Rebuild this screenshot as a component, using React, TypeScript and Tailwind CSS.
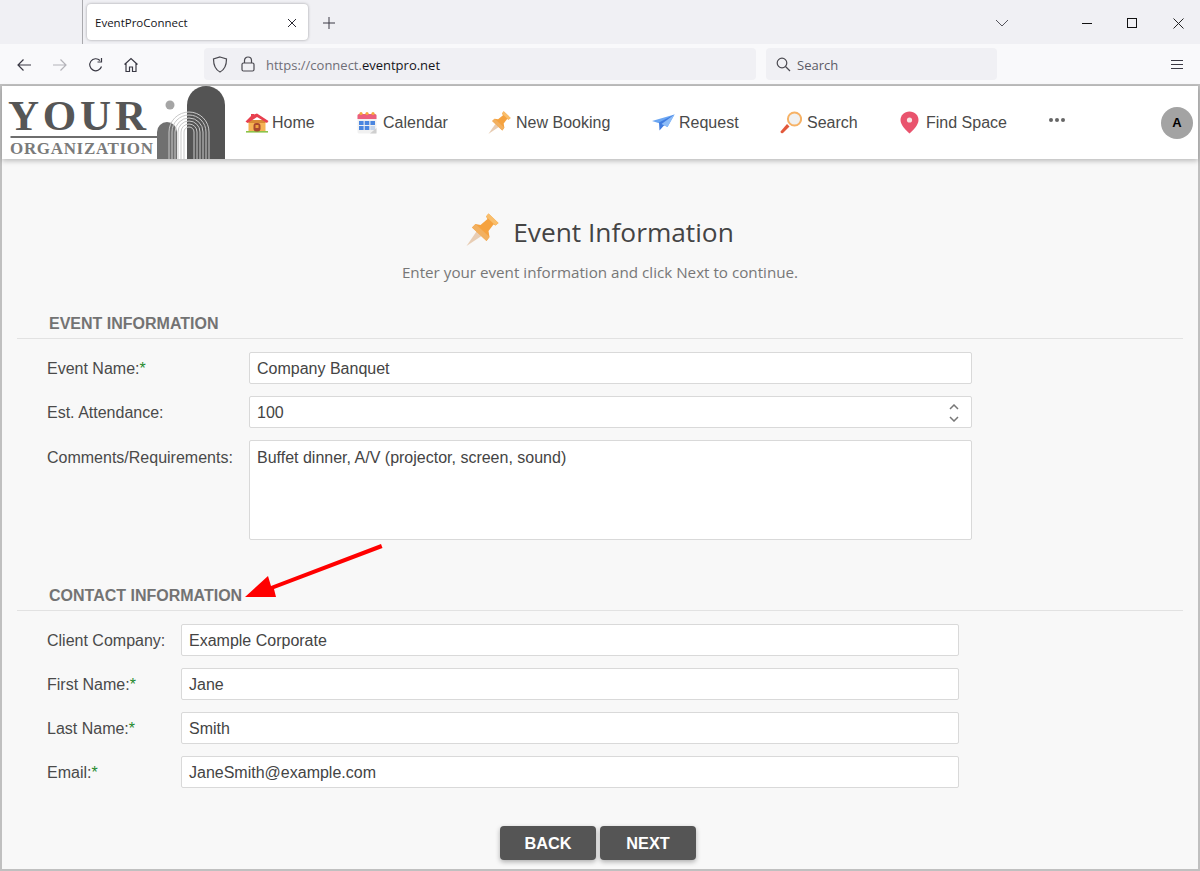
const ChromeFont = "font-['Open_Sans',sans-serif]";

const HomeIcon = () => (
    <svg width="24" height="20" viewBox="0 0 24 20" className="mt-[1px]">
        <rect x="3.5" y="7" width="17" height="11.5" fill="#f6b455" />
        <rect x="3.5" y="7" width="17" height="3" fill="#d98a35" />
        <rect x="1" y="18" width="22" height="1.6" fill="#8bc34a" />
        <path d="M0.5 8.5 L6 3 V1 H9 V1.5 L12 0.5 L23.5 8 L22 10 L12 4 L2.5 10 Z" fill="#e8404f" />
        <rect x="8.5" y="10" width="7" height="8.5" rx="3" fill="#a8482f" />
        <rect x="10.5" y="12" width="3" height="3" fill="#f0a040" />
    </svg>
);

const CalendarIcon = () => (
    <svg width="20" height="23" viewBox="0 0 20 23">
        <rect x="0.5" y="3" width="19" height="19.5" rx="1.5" fill="#f1f1f1" />
        <path d="M0.5 4.5 a1.5 1.5 0 0 1 1.5 -1.5 h16 a1.5 1.5 0 0 1 1.5 1.5 V8 H0.5 Z" fill="#ec5f7c" />
        <circle cx="4" cy="2.5" r="1.6" fill="#f5a93c" />
        <circle cx="10" cy="2.5" r="1.6" fill="#f5a93c" />
        <circle cx="16" cy="2.5" r="1.6" fill="#f5a93c" />
        <rect x="2" y="10" width="4.6" height="4" fill="#4a86e0" />
        <rect x="7.7" y="10" width="4.6" height="4" fill="#4a86e0" />
        <rect x="13.4" y="10" width="4.6" height="4" fill="#4a86e0" />
        <rect x="2" y="15" width="4.6" height="4" fill="#4a86e0" />
        <rect x="7.7" y="15" width="4.6" height="4" fill="#4a86e0" />
        <rect x="13.4" y="15" width="4.6" height="4" fill="#c4d4ea" />
        <path d="M13 22.5 L19.5 17 V22.5 Z" fill="#cfcfcf" />
    </svg>
);

const PinIcon = ({ size }: { size: number }) => (
    <svg width={size} height={size} viewBox="0 0 32 33">
        <path d="M0 33 L10 18.5 L15 23 Z" fill="#e8cdb4" />
        <path d="M22 0.5 L32 10 L29 12.5 L27 11.5 L22 18 L23 24 L20 28 L5.5 14.5 L9 11 L14 12 L21 6 L19.5 3.5 Z" fill="#f5a23f" />
        <path d="M22 0.5 L32 10 L29 12.5 L19.5 3.5 Z" fill="#f9be6c" />
        <path d="M5.5 14.5 L9 11 L23 24 L20 28 Z" fill="#f2b060" />
    </svg>
);

const PlaneIcon = () => (
    <svg width="23" height="17" viewBox="0 0 23 17">
        <path d="M0 7 L22.5 0.5 L15.5 13 L8 9.5 Z" fill="#6ba6f2" />
        <path d="M22.5 0.5 L7 8.5 L7.5 16.5 L11.5 12 Z" fill="#3f7be0" />
        <path d="M22.5 0.5 L9.5 10 L15.5 13 Z" fill="#8dbcf7" />
    </svg>
);

const LoupeIcon = () => (
    <svg width="22" height="23" viewBox="0 0 22 23">
        <path d="M0.5 20.5 L7 13 L9.5 15.5 L3 22 Q0.5 23 0.5 20.5 Z" fill="#e2583a" />
        <circle cx="14.5" cy="8" r="6.6" fill="#f1f1f1" stroke="#f6b266" strokeWidth="2" />
    </svg>
);

const MapPinIcon = () => (
    <svg width="19" height="23" viewBox="0 0 19 23">
        <path d="M9.5 0.5 C14.7 0.5 18.5 4.3 18.5 9 C18.5 14 13 19.5 9.5 22.5 C6 19.5 0.5 14 0.5 9 C0.5 4.3 4.3 0.5 9.5 0.5 Z" fill="#e9536d" />
        <circle cx="9.5" cy="9" r="2.6" fill="#f9e4e4" />
    </svg>
);

const Logo = () => (
    <svg width="220" height="73" viewBox="0 0 220 73" className="shrink-0">
        <text x="3" y="44" fontFamily="'Liberation Serif', serif" fontWeight="700" fontSize="43" fill="#565656" textLength="138" lengthAdjust="spacing">YOUR</text>
        <rect x="5.5" y="50" width="147" height="2" fill="#6e6e6e" />
        <text x="5" y="68" fontFamily="'Liberation Serif', serif" fontWeight="700" fontSize="17" fill="#7a7a7a" textLength="143" lengthAdjust="spacing">ORGANIZATION</text>
        <circle cx="165" cy="19" r="4.5" fill="#a5a5a5" />
        <path d="M182 73 V19 A19 19 0 0 1 220 19 V73 Z" fill="#545454" />
        <path d="M152 73 V46 A10 10 0 0 1 172 46 V73 Z" fill="#707070" />
        <path d="M164 73 V46 A20 20 0 0 1 204 46 V73" fill="none" stroke="#c9c9c9" strokeWidth="1" />
        <path d="M167 73 V46 A17 17 0 0 1 201 46 V73" fill="none" stroke="#c9c9c9" strokeWidth="1" />
        <path d="M170 73 V46 A14 14 0 0 1 198 46 V73" fill="none" stroke="#c9c9c9" strokeWidth="1" />
        <path d="M173 73 V46 A11 11 0 0 1 195 46 V73" fill="none" stroke="#c9c9c9" strokeWidth="1" />
        <path d="M176 73 V46 A8 8 0 0 1 192 46 V73" fill="none" stroke="#c9c9c9" strokeWidth="1" />
        <path d="M179 73 V46 A5 5 0 0 1 189 46 V73" fill="none" stroke="#c9c9c9" strokeWidth="1" />
    </svg>
);

const BrowserBar = () => (
    <div className={`shrink-0 ${ChromeFont}`}>
        <div className="h-[44px] bg-[#f0f0f4] flex items-center relative">
            <div className="w-[1px] h-[44px] bg-[#a9a9ad] ml-[82px]" />
            <div className="ml-[4px] w-[221px] h-[36px] bg-white rounded-[4px] shadow-[0_0_3px_rgba(0,0,0,0.35)] flex items-center justify-between pl-[8px] pr-[11px]">
                <span className="text-[11.5px] text-[#15141a] mt-[2px]">EventProConnect</span>
                <svg width="10" height="10" viewBox="0 0 10 10" className="mt-[2px]"><path d="M1 1 L9 9 M9 1 L1 9" stroke="#2b2a33" strokeWidth="1" /></svg>
            </div>
            <svg width="12" height="12" viewBox="0 0 12 12" className="ml-[15px] mt-[2px]"><path d="M6 0 V12 M0 6 H12" stroke="#3a3944" strokeWidth="1" /></svg>
            <div className="flex-1" />
            <svg width="14" height="8" viewBox="0 0 14 8" className="mr-[73px] mt-[2px]"><path d="M1 1 L7 7 L13 1" fill="none" stroke="#55545c" strokeWidth="1" /></svg>
            <div className="w-[10px] h-[1px] bg-[#111] mr-[35px] mt-[2px]" />
            <div className="w-[10px] h-[10px] border border-[#111] mr-[36px] mt-[2px]" />
            <svg width="11" height="11" viewBox="0 0 11 11" className="mr-[16px] mt-[2px]"><path d="M0.5 0.5 L10.5 10.5 M10.5 0.5 L0.5 10.5" stroke="#222" strokeWidth="1" /></svg>
        </div>
        <div className="h-[40px] bg-[#f9f9fb] flex items-center">
            <svg width="16" height="16" viewBox="0 0 16 16" className="ml-[16px] mt-[2px]"><path d="M15 8 H2 M7.5 2.5 L2 8 L7.5 13.5" fill="none" stroke="#3a3944" strokeWidth="1.2" /></svg>
            <svg width="16" height="16" viewBox="0 0 16 16" className="ml-[20px] mt-[2px]"><path d="M1 8 H14 M8.5 2.5 L14 8 L8.5 13.5" fill="none" stroke="#b4b3b9" strokeWidth="1.2" /></svg>
            <svg width="16" height="16" viewBox="0 0 16 16" className="ml-[20px] mt-[2px]"><path d="M13.5 9.5 A6 6 0 1 1 12 3.5 M13.5 1 V5 H9.5" fill="none" stroke="#3a3944" strokeWidth="1.2" /></svg>
            <svg width="16" height="16" viewBox="0 0 16 16" className="ml-[19px] mt-[2px]"><path d="M1.5 7.5 L8 1.5 L14.5 7.5 M3 6.5 V14.5 H6.5 V10 H9.5 V14.5 H13 V6.5" fill="none" stroke="#3a3944" strokeWidth="1.2" /></svg>
            <div className="ml-[65px] w-[552px] h-[32px] rounded-[4px] bg-[#f0f0f4] flex items-center pl-[8px]">
                <svg width="16" height="17" viewBox="0 0 16 17"><path d="M8 1 L14.5 3 C14.5 9 13 13.5 8 16 C3 13.5 1.5 9 1.5 3 Z" fill="none" stroke="#4a4950" strokeWidth="1.2" /></svg>
                <svg width="14" height="16" viewBox="0 0 14 16" className="ml-[13px]"><rect x="1" y="7" width="12" height="8" rx="1.5" fill="none" stroke="#4a4950" strokeWidth="1.2" /><path d="M3.5 7 V4.5 A3.5 3.5 0 0 1 10.5 4.5 V7" fill="none" stroke="#4a4950" strokeWidth="1.2" /></svg>
                <span className="ml-[11px] mt-[3px] text-[13px] text-[#6f6e77]">https://connect.<span className="text-[#15141a]">eventpro.net</span></span>
            </div>
            <div className="ml-[10px] w-[231px] h-[32px] rounded-[4px] bg-[#f0f0f4] flex items-center pl-[10px]">
                <svg width="15" height="15" viewBox="0 0 15 15"><circle cx="6" cy="6" r="4.8" fill="none" stroke="#4a4950" strokeWidth="1.2" /><path d="M9.5 9.5 L14 14" stroke="#4a4950" strokeWidth="1.2" /></svg>
                <span className="ml-[6px] mt-[3px] text-[13px] text-[#5b5b66]">Search</span>
            </div>
            <div className="flex-1" />
            <div className="mr-[17px] w-[12px] flex flex-col gap-[3px]">
                <div className="h-[1px] bg-[#3a3944]" />
                <div className="h-[1px] bg-[#3a3944]" />
                <div className="h-[1px] bg-[#3a3944]" />
            </div>
        </div>
    </div>
);

const NavItem = ({ icon, label, gap, width }: { icon: React.ReactNode; label: string; gap: string; width: string }) => (
    <div className={`flex items-center ${gap} ${width} shrink-0`}>
        {icon}
        <span className="text-[16px] text-[#4a4a4a]">{label}</span>
    </div>
);

const SiteHeader = () => (
    <div className="h-[73px] bg-white flex items-center shrink-0 pl-[3px] pr-[5px] shadow-[0_2px_5px_rgba(0,0,0,0.25)] relative">
        <Logo />
        <div className="ml-[20px] flex items-center flex-1">
            <NavItem icon={<HomeIcon />} label="Home" gap="gap-[3px]" width="w-[112px]" />
            <NavItem icon={<CalendarIcon />} label="Calendar" gap="gap-[6px]" width="w-[131px]" />
            <NavItem icon={<PinIcon size={23} />} label="New Booking" gap="gap-[5px]" width="w-[164px]" />
            <NavItem icon={<PlaneIcon />} label="Request" gap="gap-[4px]" width="w-[128px]" />
            <NavItem icon={<LoupeIcon />} label="Search" gap="gap-[5px]" width="w-[120px]" />
            <NavItem icon={<MapPinIcon />} label="Find Space" gap="gap-[7px]" width="w-[149px]" />
            <div className="flex gap-[2px] mb-[6px]">
                <div className="w-[4px] h-[4px] rounded-full bg-[#666]" />
                <div className="w-[4px] h-[4px] rounded-full bg-[#666]" />
                <div className="w-[4px] h-[4px] rounded-full bg-[#666]" />
            </div>
            <div className="flex-1" />
            <div className="w-[32px] h-[32px] rounded-full bg-[#a3a3a3] flex items-center justify-center text-[13px] font-bold text-black font-['Liberation_Sans',sans-serif]">A</div>
        </div>
    </div>
);

const Field = ({ label, required, value, labelWidth, fieldWidth, spinner }: { label: string; required?: boolean; value: string; labelWidth: string; fieldWidth: string; spinner?: boolean }) => (
    <div className="flex items-center h-[32px] pl-[45px]">
        <div className={`${labelWidth} text-[16px] text-[#4a4a4a] shrink-0 pt-[2px]`}>
            {label}
            {required && <span className="text-[#1f8a2e]">*</span>}
        </div>
        <div className={`${fieldWidth} h-[32px] bg-white border border-[#d9d9d9] rounded-[2px] flex items-center justify-between pl-[7px] pr-[12px] text-[16px] text-[#444]`}>
            <span className="pt-[2px]">{value}</span>
            {spinner && (
                <div className="flex flex-col gap-[6px] pt-[1px]">
                    <svg width="10" height="6" viewBox="0 0 10 6"><path d="M1 5 L5 1 L9 5" fill="none" stroke="#777" strokeWidth="1.5" /></svg>
                    <svg width="10" height="6" viewBox="0 0 10 6"><path d="M1 1 L5 5 L9 1" fill="none" stroke="#777" strokeWidth="1.5" /></svg>
                </div>
            )}
        </div>
    </div>
);

const SectionTitle = ({ title }: { title: string }) => (
    <div className="mx-[15px] pl-[32px] h-[24px] border-b border-[#e2e2e2] text-[16px] font-bold text-[#737373] leading-[18px] uppercase">
        {title}
    </div>
);

export default function App() {
    return (
        <div className="w-[1200px] h-[871px] overflow-hidden flex flex-col font-['Liberation_Sans',sans-serif] relative">
            <BrowserBar />
            <div className="flex-1 flex flex-col border-2 border-[#c0c0c0] bg-[#f8f8f8] min-h-0">
                <SiteHeader />
                <div className="flex flex-col flex-1">
                    <div className="flex items-center justify-center mt-[52px] h-[36px]">
                        <PinIcon size={33} />
                        <h1 className="ml-[14px] mt-[8px] text-[26.3px] font-normal text-[#444] font-['Open_Sans',sans-serif]">Event Information</h1>
                    </div>
                    <p className="text-center text-[15.2px] text-[#777] mt-[13px] h-[24px] leading-[24px] font-['Open_Sans',sans-serif]">Enter your event information and click Next to continue.</p>
                    <div className="mt-[31px]"><SectionTitle title="Event Information" /></div>
                    <div className="flex flex-col gap-[12px] mt-[13px]">
                        <Field label="Event Name:" required value="Company Banquet" labelWidth="w-[202px]" fieldWidth="w-[723px]" />
                        <Field label="Est. Attendance:" value="100" labelWidth="w-[202px]" fieldWidth="w-[723px]" spinner />
                        <div className="flex pl-[45px]">
                            <div className="w-[202px] text-[16px] text-[#4a4a4a] shrink-0 pt-[6px]">Comments/Requirements:</div>
                            <div className="w-[723px] h-[100px] bg-white border border-[#d9d9d9] rounded-[2px] pl-[7px] pt-[5px] text-[16px] text-[#444]">Buffet dinner, A/V (projector, screen, sound)</div>
                        </div>
                    </div>
                    <div className="mt-[47px]"><SectionTitle title="Contact Information" /></div>
                    <div className="flex flex-col gap-[12px] mt-[13px]">
                        <Field label="Client Company:" value="Example Corporate" labelWidth="w-[134px]" fieldWidth="w-[778px]" />
                        <Field label="First Name:" required value="Jane" labelWidth="w-[134px]" fieldWidth="w-[778px]" />
                        <Field label="Last Name:" required value="Smith" labelWidth="w-[134px]" fieldWidth="w-[778px]" />
                        <Field label="Email:" required value="JaneSmith@example.com" labelWidth="w-[134px]" fieldWidth="w-[778px]" />
                    </div>
                    <div className="flex justify-center gap-[4px] mt-[38px] pr-[4px]">
                        <button className="w-[96px] h-[34px] bg-[#555] rounded-[4px] text-white font-bold text-[16.3px] shadow-[0_2px_5px_rgba(0,0,0,0.3)]">BACK</button>
                        <button className="w-[96px] h-[34px] bg-[#555] rounded-[4px] text-white font-bold text-[16.3px] shadow-[0_2px_5px_rgba(0,0,0,0.3)]">NEXT</button>
                    </div>
                </div>
            </div>
            {/* annotation arrow */}
            <svg width="1200" height="871" className="absolute left-0 top-0 pointer-events-none">
                <path d="M245 597 L268 576 L271 586 L381 544 L382.5 548 L274 589 L276 597 Z" fill="#ff0000" />
            </svg>
        </div>
    );
}
